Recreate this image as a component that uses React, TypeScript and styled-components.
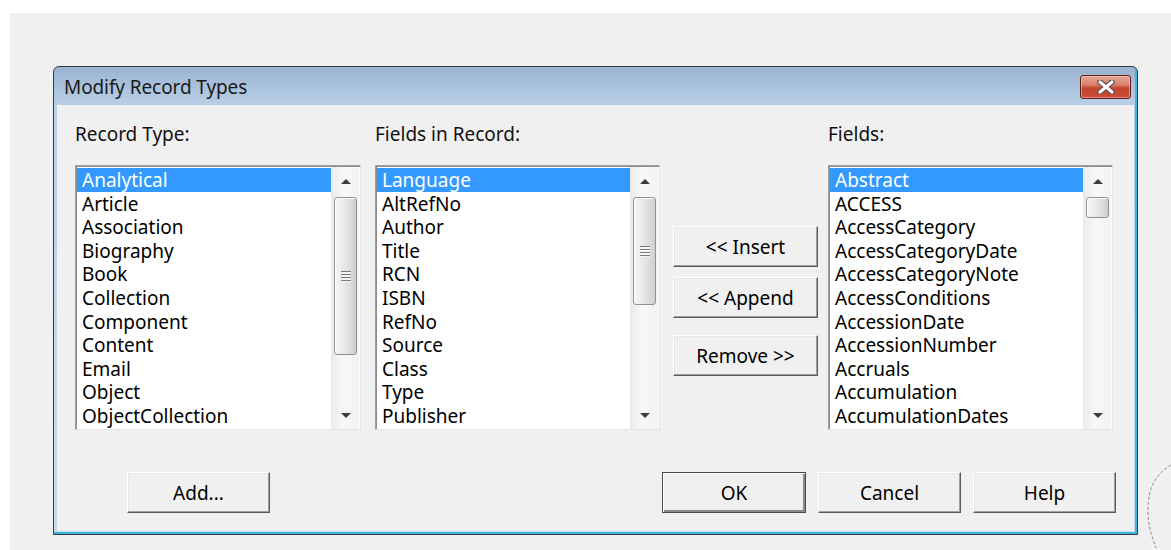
import styled, { createGlobalStyle } from "styled-components";

const GlobalStyle = createGlobalStyle`
  html, body {
    margin: 0;
    background: #ffffff;
  }
  body {
    font-family: "Noto Sans", "Open Sans", sans-serif;
  }
`;

const Screen = styled.div`
  padding: 13px 0 0 10px;
`;

const Desktop = styled.div`
  position: relative;
  height: 537px;
  background: #f0f0f0;
  padding: 53px 0 0 43px;
  box-sizing: border-box;
  overflow: hidden;
`;

const Window = styled.div`
  width: 1085px;
  height: 469px;
  box-sizing: border-box;
  display: flex;
  flex-direction: column;
  border: 1px solid #3a3a3a;
  border-radius: 6px 6px 0 0;
  background: linear-gradient(to bottom, #9ab3d0 0, #b9cfe7 38px, #c8dbef 100%);
  box-shadow: inset -2px -2px 0 #38b6de;
`;

const TitleBar = styled.div`
  height: 38px;
  flex: none;
  display: flex;
  align-items: center;
  justify-content: space-between;
  padding: 1px 6px 0 10px;
  box-sizing: border-box;
`;

const Title = styled.span`
  font-size: 19px;
  color: #1a1a1a;
  letter-spacing: -0.1px;
`;

const CloseButton = styled.button`
  width: 51px;
  height: 24px;
  padding: 0;
  display: flex;
  align-items: center;
  justify-content: center;
  border: 1px solid #5e2119;
  border-radius: 3px;
  background: linear-gradient(
    to bottom,
    #e8a596 0,
    #d9806e 40%,
    #c4452f 55%,
    #c94e37 100%
  );
  box-shadow: inset 0 0 0 1px rgba(255, 220, 210, 0.45);
`;

const Body = styled.div`
  flex: 1;
  margin: 0 3px 3px 3px;
  background: #f0f0f0;
  display: flex;
  flex-direction: column;
  padding: 17px 21px 0 18px;
`;

const Columns = styled.div`
  display: flex;
  align-items: flex-start;
`;

const Column = styled.div<{ $width: number; $left?: number; $top?: number }>`
  width: ${(p) => p.$width}px;
  margin-left: ${(p) => p.$left ?? 0}px;
  margin-top: ${(p) => p.$top ?? 0}px;
  display: flex;
  flex-direction: column;
`;

const Label = styled.div`
  height: 22px;
  line-height: 24px;
  font-size: 19px;
  color: #111;
  margin-bottom: 21px;
`;

const ListBox = styled.div`
  height: 265px;
  box-sizing: border-box;
  display: flex;
  background: #ffffff;
  border: 1px solid;
  border-color: #a0a0a0 #e3e3e3 #e3e3e3 #a0a0a0;
  box-shadow: inset 1px 1px 0 #8c8c8c;
  padding: 1px 1px 0 1px;
`;

const Items = styled.div`
  flex: 1;
  overflow: hidden;
  padding-top: 1px;
`;

const Item = styled.div<{ $selected?: boolean }>`
  height: 23.6px;
  line-height: 25px;
  padding-left: 5px;
  font-size: 19px;
  white-space: nowrap;
  color: ${(p) => (p.$selected ? "#ffffff" : "#000000")};
  background: ${(p) => (p.$selected ? "#3399ff" : "transparent")};
`;

const ScrollBar = styled.div`
  width: 27px;
  flex: none;
  display: flex;
  flex-direction: column;
  align-items: center;
  background: linear-gradient(to right, #ececec, #f7f7f7 40%, #f3f3f3);
  border-left: 1px solid #e9e9e9;
`;

const Arrow = styled.div<{ $down?: boolean }>`
  height: 28px;
  flex: none;
  display: flex;
  align-items: center;
  justify-content: center;
  &::before {
    content: "";
    width: 0;
    height: 0;
    border-left: 5px solid transparent;
    border-right: 5px solid transparent;
    ${(p) =>
      p.$down ? "border-top: 5px solid #3c3c3c;" : "border-bottom: 5px solid #3c3c3c;"}
  }
`;

const Track = styled.div`
  flex: 1;
  width: 100%;
  display: flex;
  justify-content: center;
`;

const Thumb = styled.div`
  width: 23px;
  box-sizing: border-box;
  margin-top: 2px;
  border: 1px solid #929292;
  border-radius: 3px;
  background: linear-gradient(to right, #f6f6f6 0, #e8e8e8 45%, #cfcfcf 100%);
  box-shadow: inset 1px 1px 0 #ffffff;
  display: flex;
  align-items: center;
  justify-content: center;
`;

const Grip = styled.div`
  width: 10px;
  height: 11px;
  background: repeating-linear-gradient(
    to bottom,
    #7a7a7a 0,
    #7a7a7a 1px,
    #f4f4f4 1px,
    #f4f4f4 3px
  );
`;

const Button = styled.button<{ $default?: boolean; $width?: number }>`
  width: ${(p) => p.$width ?? 145}px;
  height: 41px;
  padding: 0;
  font-family: "Noto Sans", "Open Sans", sans-serif;
  font-size: 19px;
  color: #000;
  background: #f0f0f0;
  border: 1px solid;
  border-color: ${(p) =>
    p.$default ? "#4a4a4a" : "#ffffff #5a5a5a #5a5a5a #ffffff"};
  box-shadow: ${(p) =>
    p.$default
      ? "inset 1px 1px 0 #ffffff, inset -2px -2px 0 #8a8a8a"
      : "inset -1px -1px 0 #a0a0a0, inset 1px 1px 0 #e6e6e6"};
`;

const MoveButtons = styled.div`
  display: flex;
  flex-direction: column;
`;

const Footer = styled.div`
  margin-top: 42px;
  display: flex;
  justify-content: space-between;
  padding: 0 0 0 52px;
  margin-right: -3px;
`;

const FooterGroup = styled.div`
  display: flex;
  gap: 12px;
`;

const Scribble = styled.svg`
  position: absolute;
  right: 0;
  bottom: 0;
`;

const recordTypes = [
  "Analytical",
  "Article",
  "Association",
  "Biography",
  "Book",
  "Collection",
  "Component",
  "Content",
  "Email",
  "Object",
  "ObjectCollection",
];

const recordFields = [
  "Language",
  "AltRefNo",
  "Author",
  "Title",
  "RCN",
  "ISBN",
  "RefNo",
  "Source",
  "Class",
  "Type",
  "Publisher",
];

const allFields = [
  "Abstract",
  "ACCESS",
  "AccessCategory",
  "AccessCategoryDate",
  "AccessCategoryNote",
  "AccessConditions",
  "AccessionDate",
  "AccessionNumber",
  "Accruals",
  "Accumulation",
  "AccumulationDates",
];

function List({ items, thumb, grip }: { items: string[]; thumb: number; grip?: boolean }) {
  return (
    <ListBox>
      <Items>
        {items.map((item, i) => (
          <Item key={item} $selected={i === 0}>
            {item}
          </Item>
        ))}
      </Items>
      <ScrollBar>
        <Arrow />
        <Track>
          <Thumb style={{ height: thumb }}>{grip && <Grip />}</Thumb>
        </Track>
        <Arrow $down />
      </ScrollBar>
    </ListBox>
  );
}

function CloseGlyph() {
  return (
    <svg width="22" height="14" viewBox="0 0 22 14">
      <path d="M5 2 L17 12 M17 2 L5 12" stroke="#5a4640" strokeWidth="5.5" strokeLinecap="round" />
      <path d="M5 2 L17 12 M17 2 L5 12" stroke="#ffffff" strokeWidth="3.2" strokeLinecap="round" />
    </svg>
  );
}

export default function App() {
  return (
    <>
      <GlobalStyle />
      <Screen>
        <Desktop>
          <Window>
            <TitleBar>
              <Title>Modify Record Types</Title>
              <CloseButton aria-label="Close">
                <CloseGlyph />
              </CloseButton>
            </TitleBar>
            <Body>
              <Columns>
                <Column $width={286}>
                  <Label>Record Type:</Label>
                  <List items={recordTypes} thumb={158} grip />
                </Column>
                <Column $width={285} $left={14}>
                  <Label>Fields in Record:</Label>
                  <List items={recordFields} thumb={108} grip />
                </Column>
                <Column $width={145} $left={13} $top={104}>
                  <MoveButtons>
                    <Button>&lt;&lt; Insert</Button>
                    <Button style={{ marginTop: 10 }}>&lt;&lt; Append</Button>
                    <Button style={{ marginTop: 17 }}>Remove &gt;&gt;</Button>
                  </MoveButtons>
                </Column>
                <Column $width={285} $left={10}>
                  <Label>Fields:</Label>
                  <List items={allFields} thumb={21} />
                </Column>
              </Columns>
              <Footer>
                <Button $width={143}>Add...</Button>
                <FooterGroup>
                  <Button $default $width={144}>OK</Button>
                  <Button $width={143}>Cancel</Button>
                  <Button $width={143}>Help</Button>
                </FooterGroup>
              </Footer>
            </Body>
          </Window>
          <Scribble width="40" height="100" viewBox="0 0 40 100">
            <path
              d="M40 15 C32 20 26 26 22 34 C18 42 17 52 17 62 C17 74 20 84 25 98"
              fill="none"
              stroke="#8a8a8a"
              strokeWidth="1"
              strokeDasharray="3 2"
            />
          </Scribble>
        </Desktop>
      </Screen>
    </>
  );
}
